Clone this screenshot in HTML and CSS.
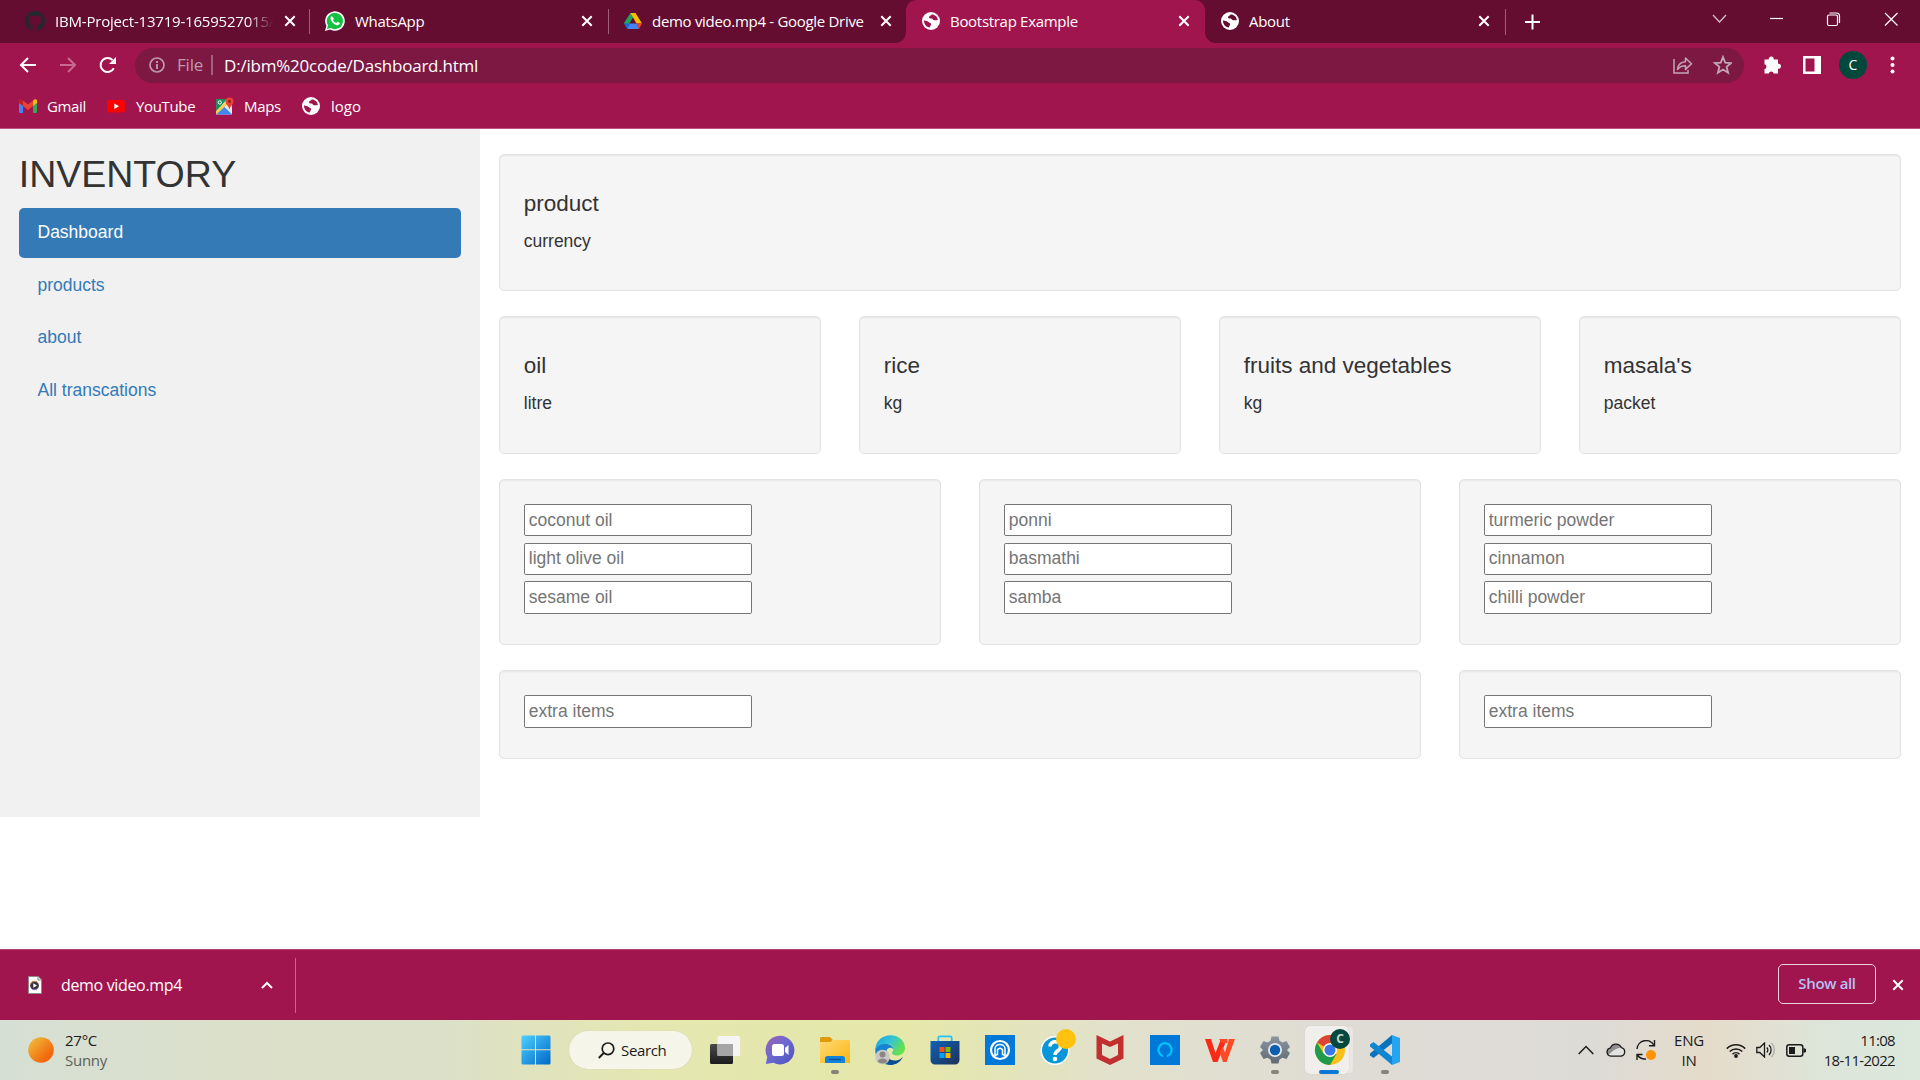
FILE: index.html
```html
<!DOCTYPE html>
<html lang="en">
<head>
<meta charset="utf-8">
<title>Bootstrap Example</title>
<link rel="stylesheet" href="styles.css">
</head>
<body>
<svg class="defs" width="0" height="0">
  <defs>
    <symbol id="globe" viewBox="0 0 18 18"><circle cx="9" cy="9" r="9" fill="#fff"/><path d="M2 8.200c1.600 1 3.400.5 4.600 1.700.8.900 2.200.8 2.500 2 .2 1.200-1.100 1.600-1.300 3.700C4.500 15 1.800 12.300 2 8.200zM9.600 2.500c-.3 1.200-2.400 1.200-2.600 2.500-.1 1.100 1.100 1.700 2.400 1.600 1.200 0 1.400 1.300 2.500 1.600 1.400.4 2.900-.2 4-.1-.4-3.400-3-5.700-6.300-5.600z" class="land"/></symbol>
    <symbol id="x" viewBox="0 0 12 12"><path d="M1.300 1.300l9.400 9.400M10.700 1.300l-9.400 9.400" fill="none" stroke="#fff" stroke-width="2"/></symbol>
    <linearGradient id="gWin" x1="0" y1="0" x2="1" y2="1"><stop offset="0" stop-color="#4fd0ff"/><stop offset="1" stop-color="#0067c8"/></linearGradient>
    <linearGradient id="gSun" x1="0" y1="0" x2="1" y2="1"><stop offset=".1" stop-color="#f0b838"/><stop offset=".75" stop-color="#f2690d"/></linearGradient>
    <linearGradient id="gDark" x1="0" y1="0" x2="0" y2="1"><stop offset="0" stop-color="#4a4a4a"/><stop offset="1" stop-color="#1c1c1c"/></linearGradient>
    <linearGradient id="gChat" x1="0" y1="0" x2="1" y2="1"><stop offset="0" stop-color="#9a63b0"/><stop offset=".5" stop-color="#6a68d0"/><stop offset="1" stop-color="#4a50c0"/></linearGradient>
    <linearGradient id="gFold" x1="0" y1="0" x2="1" y2="1"><stop offset="0" stop-color="#ffd976"/><stop offset="1" stop-color="#fbb612"/></linearGradient>
    <linearGradient id="gEdge" x1="0" y1="0" x2="1" y2=".5"><stop offset="0" stop-color="#1c9fe0"/><stop offset=".5" stop-color="#30c3d8"/><stop offset="1" stop-color="#66e24c"/></linearGradient>
    <linearGradient id="gStore" x1="0" y1="0" x2="1" y2="1"><stop offset="0" stop-color="#0f63b8"/><stop offset="1" stop-color="#1f2f58"/></linearGradient>
    <linearGradient id="gGear" x1="0" y1="0" x2="0" y2="1"><stop offset="0" stop-color="#8c959f"/><stop offset="1" stop-color="#616b76"/></linearGradient>
  </defs>
</svg>

<header class="browser">
  <div class="tabstrip">
    <div class="tab">
      <svg class="fav gh" viewBox="0 0 16 16"><path fill="#24292f" d="M8 0C3.580 0 0 3.580 0 8c0 3.540 2.290 6.530 5.470 7.590.4.070.55-.17.55-.38 0-.19-.010-.82-.010-1.490-2.010.37-2.530-.49-2.690-.94-.090-.23-.48-.94-.82-1.130-.28-.15-.68-.52-.010-.53.63-.010 1.080.58 1.230.82.72 1.210 1.870.87 2.330.66.070-.52.28-.87.51-1.070-1.780-.2-3.640-.89-3.640-3.950 0-.87.31-1.590.82-2.150-.080-.2-.36-1.020.080-2.120 0 0 .67-.21 2.200.82.64-.18 1.320-.27 2-.27s1.360.090 2 .27c1.530-1.040 2.200-.82 2.200-.82.44 1.100.16 1.920.080 2.120.51.56.82 1.270.82 2.150 0 3.070-1.870 3.750-3.650 3.950.29.25.54.73.54 1.480 0 1.070-.010 1.930-.010 2.200 0 .21.15.46.55.38A8 8 0 0 0 16 8c0-4.420-3.580-8-8-8z"/></svg>
      <span class="title fade">IBM-Project-13719-1659527015/</span>
      <svg class="close"><use href="#x"/></svg>
    </div>
    <div class="tab sep">
      <svg class="fav gh" viewBox="0 0 20 20"><path d="M0 20l1.400-5.200A9.800 9.800 0 1 1 5.200 18.600z" fill="#fff"/><path d="M2 18l1-3.700a8.100 8.100 0 1 1 2.900 2.800z" fill="#14c143"/><path d="M7 5.200c-.9.200-1.700 1.200-1.500 2.600.5 3 3.800 6 6.600 6.400 1.500.1 2.600-.8 2.700-2.200l-2.300-1.200-1.200 1.300c-1.600-.6-2.700-1.700-3.300-3.100l1-1.200z" fill="#fff"/></svg>
      <span class="title">WhatsApp</span>
      <svg class="close"><use href="#x"/></svg>
    </div>
    <div class="tab sep">
      <svg class="fav" viewBox="0 0 18 18"><path d="M6.500 1h5L6 10.500 3 16 0 11z" fill="#1ea55b"/><path d="M6.500 1h5L18 11.500h-5.500z" fill="#fbbc04"/><path d="M0 11.500h6L3.200 17z" fill="#1967d2"/><path d="M5.800 11.500h6.700L15 17H3.200z" fill="#4285f4"/><path d="M12.500 11.500H18L15 17z" fill="#ea4335"/></svg>
      <span class="title">demo video.mp4 - Google Drive</span>
      <svg class="close"><use href="#x"/></svg>
    </div>
    <div class="tab active">
      <svg class="fav"><use href="#globe"/></svg>
      <span class="title">Bootstrap Example</span>
      <svg class="close"><use href="#x"/></svg>
    </div>
    <div class="tab">
      <svg class="fav"><use href="#globe"/></svg>
      <span class="title">About</span>
      <svg class="close"><use href="#x"/></svg>
    </div>
    <svg class="newtab" viewBox="0 0 54 26"><path d="M.5 0v26" stroke="#9d5f7a"/><path d="M20 13h15M27.500 5.500v15" stroke="#fff" stroke-width="2"/></svg>
    <svg class="winbtns" viewBox="0 0 201 20"><g fill="none" stroke="#fff" stroke-width="1.200"><path d="M13 6l6.500 7L26 6" stroke="#d9c4cd"/><path d="M70 9.500h13"/><rect x="127.500" y="6" width="10" height="10.500" rx="1.500"/><path d="M129.500 4h7a3 3 0 0 1 3 3v7"/><path d="M185 4l12.500 12.500M197.500 4L185 16.500"/></g></svg>
  </div>

  <div class="toolbar">
    <svg class="nav" viewBox="0 0 102 20"><g fill="none" stroke="#fff" stroke-width="2"><path d="M17 10H2M9 3l-7 7 7 7"/><path d="M41 10h15M49 3l7 7-7 7" stroke="#c66b90"/><path d="M94.800 13.300A7 7 0 1 1 93.500 5"/></g><path d="M97 2v7h-7z" fill="#fff"/></svg>
    <div class="omnibox">
      <svg class="info" viewBox="0 0 16 16"><circle cx="8" cy="8" r="7" fill="none" stroke="#bd9aaa" stroke-width="1.700"/><path d="M8 7v5M8 4v2" stroke="#bd9aaa" stroke-width="1.900"/></svg>
      <span class="scheme">File</span>
      <span class="url">D:/ibm%20code/Dashboard.html</span>
      <svg class="omni-icons" viewBox="0 0 60 20"><g fill="none" stroke="#c3a6b3" stroke-width="1.500"><path d="M2 4v14h14v-3"/><path d="M5.500 14.500c.5-4.500 3-7.500 8-7.700V3l6 5.700-6 5.700v-3.700c-3.500 0-6 1-8 3.800z" stroke-linejoin="round"/><path d="M51 2l2.200 5.600 6 .4-4.600 3.800 1.500 5.900-5.100-3.200-5.100 3.200 1.500-5.900L42.800 8l6-.4z" stroke-width="1.800"/></g></svg>
    </div>
    <svg class="ext" viewBox="0 0 58 20"><path d="M1.500 4.500h4.300a2.500 2.500 0 1 1 4.900 0h4.300v4.300a2.500 2.500 0 1 1 0 4.900v4.800h-4.300a2.500 2.500 0 0 0-4.900 0H1.500v-4.400a2.500 2.500 0 0 0 0-4.900z" fill="#fff"/><path d="M40 1h18v18H40zM42.500 3.500v13h9v-13z" fill="#fff" fill-rule="evenodd"/></svg>
    <span class="avatar">C</span>
    <svg class="dots" viewBox="0 0 4 18"><g fill="#fff"><circle cx="2" cy="2.500" r="2"/><circle cx="2" cy="9" r="2"/><circle cx="2" cy="15.500" r="2"/></g></svg>
  </div>

  <nav class="bookmarks">
    <span class="bm b1"><svg viewBox="0 0 18 18"><path d="M0 4l4 3v9H1.200A1.200 1.200 0 0 1 0 15z" fill="#4285f4"/><path d="M18 4l-4 3v9h2.800A1.200 1.200 0 0 0 18 15z" fill="#34a853"/><path d="M4 3.500l5 4 5-4V9l-5 4-5-4z" fill="#ea4335"/><path d="M0 4c0-2 2-2.500 4-.5V9L0 6z" fill="#c5221f"/><path d="M18 4c0-2-2-2.500-4-.5V9l4-3z" fill="#fbbc04"/></svg>Gmail</span>
    <span class="bm b2"><svg viewBox="0 0 18 18"><rect y="3" width="18" height="12.500" rx="3" fill="#f00"/><path d="M7.300 6.500v5.500l4.700-2.700z" fill="#fff"/></svg>YouTube</span>
    <span class="bm b3"><svg viewBox="0 0 18 18"><rect y="2" width="16" height="15.500" rx="1" fill="#e8e8e8"/><path d="M0 2h11L0 15z" fill="#1e8e5a"/><path d="M0 17.500l8-8 8 8z" fill="#4285f4"/><path d="M0 17.500V14L12 2.500l2 2.500z" fill="#fbd04b"/><path d="M13.500.5a4 4 0 0 1 4 4c0 3-3 4-4 8-1-4-4-5-4-8a4 4 0 0 1 4-4z" fill="#ea4335"/><circle cx="13.500" cy="4.500" r="1.400" fill="#8c1f17"/><circle cx="3.800" cy="5.500" r="1.600" fill="none" stroke="#fff"/></svg>Maps</span>
    <span class="bm b4"><svg viewBox="0 0 18 18"><use href="#globe"/></svg>logo</span>
  </nav>
</header>

<main class="page">
  <div class="content">
    <aside class="sidenav">
      <h2>INVENTORY</h2>
      <ul class="nav-stacked">
        <li class="current"><a>Dashboard</a></li>
        <li><a>products</a></li>
        <li><a>about</a></li>
        <li><a>All transcations</a></li>
      </ul>
    </aside>
    <section class="main-col">
      <div class="well"><h4>product</h4><p>currency</p></div>
      <div class="row quarters">
        <div class="well"><h4>oil</h4><p>litre</p></div>
        <div class="well"><h4>rice</h4><p>kg</p></div>
        <div class="well"><h4>fruits and vegetables</h4><p>kg</p></div>
        <div class="well"><h4>masala's</h4><p>packet</p></div>
      </div>
      <div class="row thirds">
        <div class="well"><input placeholder="coconut oil"><input placeholder="light olive oil"><input placeholder="sesame oil"></div>
        <div class="well"><input placeholder="ponni"><input placeholder="basmathi"><input placeholder="samba"></div>
        <div class="well"><input placeholder="turmeric powder"><input placeholder="cinnamon"><input placeholder="chilli powder"></div>
      </div>
      <div class="row thirds">
        <div class="well wide"><input placeholder="extra items"></div>
        <div class="well"><input placeholder="extra items"></div>
      </div>
    </section>
  </div>
</main>

<div class="downloads">
  <div class="item">
    <svg class="file" viewBox="0 0 14 18"><path d="M.5.500h9.500l3.500 3.500v13.500H.5z" fill="#fff" stroke="#8b8b8b"/><path d="M10 .5V4h3.500" fill="#ddd" stroke="#8b8b8b"/><circle cx="6.500" cy="9.500" r="4.400" fill="#3a3340"/><path d="M2.300 8.500a4.300 4.300 0 0 1 8 -1" fill="none" stroke="#f28a35"/><path d="M3 12a4.300 4.300 0 0 0 7 0" fill="none" stroke="#a06cc0"/><path d="M5.300 7.300v4.400L9 9.500z" fill="#fff"/></svg>
    <span class="name">demo video.mp4</span>
    <svg class="caret" viewBox="0 0 12 8"><path d="M1 7l5-5 5 5" fill="none" stroke="#fff" stroke-width="2"/></svg>
  </div>
  <button class="showall">Show all</button>
  <svg class="close"><use href="#x"/></svg>
</div>

<footer class="taskbar">
  <div class="weather">
    <svg viewBox="0 0 26 26"><circle cx="13" cy="13" r="12.800" fill="url(#gSun)"/></svg>
    <div><div>27°C</div><div class="muted">Sunny</div></div>
  </div>
  <div class="apps">
    <span class="app start"><svg viewBox="0 0 30 30"><path d="M.5 2a1.500 1.500 0 0 1 1.500-1.500h12v13.800H.5zM15 .5h13a1.500 1.500 0 0 1 1.500 1.500v12.300H15zM.5 15.300H14v14.200H2A1.500 1.500 0 0 1 .5 28zM15 15.300h14.500V28a1.500 1.500 0 0 1-1.500 1.500H15z" fill="url(#gWin)"/></svg></span>
    <span class="search"><svg viewBox="0 0 17 17"><circle cx="10" cy="6.800" r="5.800" fill="none" stroke="#1b1b1b" stroke-width="1.700"/><path d="M5.700 11L.8 16" stroke="#1b1b1b" stroke-width="1.900"/></svg>Search</span>
    <span class="app"><svg viewBox="0 0 30 30"><rect y="9" width="23" height="20" rx="1.500" fill="url(#gDark)"/><rect x="7.500" y="1" width="22.500" height="20" rx="1.500" fill="#f5f5f5"/><rect x="7.500" y="9" width="15.500" height="12" fill="#a6a6a6"/></svg></span>
    <span class="app"><svg viewBox="0 0 30 30"><path d="M15 .8a14.300 14.300 0 1 1-6.500 27L.8 29l1.500-7A14.300 14.300 0 0 1 15 .8z" fill="url(#gChat)"/><rect x="7" y="9" width="12" height="12" rx="2.500" fill="#fff"/><path d="M20 13l3.500-3v10L20 17z" fill="#fff"/></svg></span>
    <span class="app run"><svg viewBox="0 0 30 30"><path d="M0 3.500A1.500 1.500 0 0 1 1.500 2H10l3 3v6H0z" fill="#e09b09"/><path d="M0 7h10.500l2-2H28.500A1.500 1.500 0 0 1 30 6.500V28H0z" fill="url(#gFold)"/><path d="M5 28v-4.500A2.500 2.500 0 0 1 7.500 21h15a2.500 2.500 0 0 1 2.500 2.500V28z" fill="#1083d8"/><path d="M9 24.500h12" stroke="#0c4f91" stroke-width="1.300"/></svg></span>
    <span class="app"><svg viewBox="0 0 30 30"><path d="M.3 14C1 5 8 .2 15.500.2 24 .2 30 6 30 13c0 5-4 7.500-8 7.500-3 0-5-1-5-2.500s1.500-1.600 1.500-4c0-3-3-5-6.500-5C7 9 3 10.500.3 14z" fill="url(#gEdge)"/><path d="M.3 14C3 9.500 8 8.500 12 9c4 .5 6.500 3 6.500 5.500-2-3-6-2-7 1-1.500 5 3 11.500 9 12.500-2 1.300-4 1.900-6 1.900C6 29.500-.5 23 .3 14z" fill="#1684d2"/><path d="M11.500 15.500c-1.500 5 3 11 10 10 2.500-.5 5-2 6.500-3.500C25 28 19 31 13 29.500 7 26 8 18 11.500 15.500z" fill="#0b4c92"/><circle cx="7.500" cy="22" r="7.300" fill="#cbc9c7"/><circle cx="7.500" cy="19.500" r="3" fill="#8a8683"/><path d="M2.500 26.500c1-4 9-4 10 0a7 7 0 0 1-10 0z" fill="#8a8683"/></svg></span>
    <span class="app"><svg viewBox="0 0 30 30"><path d="M8.300 7V2.800A1.500 1.500 0 0 1 9.800 1.300h10.400a1.500 1.500 0 0 1 1.500 1.500V7" fill="none" stroke="#27c4f5" stroke-width="1.800"/><path d="M.5 6h29v19a4.500 4.500 0 0 1-4.500 4.500H5A4.500 4.500 0 0 1 .5 25z" fill="url(#gStore)"/><path d="M9.500 12h5v5h-5z" fill="#f25022"/><path d="M15.500 12h5v5h-5z" fill="#7fba00"/><path d="M9.500 18h5v5h-5z" fill="#00a4ef"/><path d="M15.500 18h5v5h-5z" fill="#ffb900"/></svg></span>
    <span class="app"><svg viewBox="0 0 30 30"><path fill="#0078d7" d="M0 0h30v30H0z"/><circle cx="15" cy="15" r="9" fill="none" stroke="#fff" stroke-width="2.200"/><path d="M10 20.500v-6.500c0-6 10-6 10 0v6.500l-2.500-1v-5l-2.500-1.500-2.500 1.500v5z" fill="none" stroke="#fff" stroke-width="1.500"/></svg></span>
    <span class="app"><svg viewBox="0 0 30 30"><circle cx="15" cy="15.500" r="14.500" fill="#fff"/><circle cx="15" cy="15.500" r="13" fill="#0a97d9"/><path d="M10 11.500c0-6.500 10.500-6 10.500 0 0 4.500-5.500 4-5.500 8.500" fill="none" stroke="#fff" stroke-width="3.500"/><circle cx="15" cy="24" r="2.300" fill="#fff"/><circle cx="26" cy="4" r="10" fill="#ffc20e"/></svg></span>
    <span class="app"><svg viewBox="0 0 30 30"><path d="M1.500 0L15 6.500 28.500 0v23.500L15 30 1.500 23.500zM7 8.500V20l8 4 8-4V8.500L15 12z" fill="#c22f31" fill-rule="evenodd"/></svg></span>
    <span class="app"><svg viewBox="0 0 30 30"><path fill="#0078d7" d="M0 0h30v30H0z"/><path d="M13 21.200a6.600 6.600 0 1 1 4 0" fill="none" stroke="#00caff" stroke-width="2"/></svg></span>
    <span class="app"><svg viewBox="0 0 30 30"><path d="M0 4h6l4.500 14L16 4h6l-9.500 23H8z" fill="#fa2a17"/><path d="M14 4h8.500v4H17zM24 4h6l-8.500 23H18l-3.500-10 3-6 2.500 6.500z" fill="#ff4a25"/></svg></span>
    <span class="app run"><svg viewBox="0 0 30 30"><path d="M11.500 1.500h7l1 4.200 3 1.700 4-1.300L30 12l-3 3 3 3-3.500 6-4-1.300-3 1.700-1 4.100h-7l-1-4.100-3-1.700-4 1.300L0 18l3-3-3-3 3.500-5.900 4 1.300 3-1.700z" fill="url(#gGear)"/><circle cx="15" cy="15" r="7" fill="#e8eaec"/><circle cx="15" cy="15" r="5.200" fill="#0c5fae"/></svg></span>
    <span class="app focused"><svg viewBox="0 0 30 30"><circle cx="15" cy="15" r="15" fill="#fbc116"/><path d="M15 15L2 7.500A15 15 0 0 1 28 7.500H15z" fill="#db4437"/><path d="M15 15l6.500 4L15 30A15 15 0 0 1 2 7.500l6.500 11z" fill="#1e9b4b"/><circle cx="15" cy="15" r="7" fill="#fff"/><circle cx="15" cy="15" r="5.500" fill="#3b78e7"/></svg><b class="badge">C</b></span>
    <span class="app run"><svg viewBox="0 0 30 30"><path d="M22 0l8 3v24l-8 3z" fill="#25a4f0"/><path d="M22 0v8.500L3.500 23 0 20.500v-2z" fill="#0b72bd"/><path d="M22 30v-8.500L3.500 7 0 9.500v2z" fill="#1187d4"/></svg></span>
  </div>
  <div class="tray">
    <svg class="arrow" viewBox="0 0 16 10"><path d="M.7 9L8 1.500 15.300 9" fill="none" stroke="#1b1b1b" stroke-width="1.500"/></svg>
    <svg class="cloud" viewBox="0 0 20 14"><path d="M5 13.200a4.200 4.200 0 0 1-.6-8.300 6 6 0 0 1 11-.3 4.400 4.400 0 0 1-.4 8.600z" fill="#e2e2e0"/><path d="M2 12A4 4 0 0 1 4.400 5a6 6 0 0 1 11-.4c-6 .5-9 4-13.400 7.400z" fill="#8f8f8f"/><path d="M5 13.200a4.200 4.200 0 0 1-.6-8.300 6 6 0 0 1 11-.3 4.400 4.400 0 0 1-.4 8.600z" fill="none" stroke="#1b1b1b" stroke-width="1.300"/></svg>
    <svg class="sync" viewBox="0 0 20 20"><g fill="none" stroke="#1b1b1b" stroke-width="1.400"><path d="M1 9a9 9 0 0 1 17-3.500M18.500 0v5.800H13M1 20v-5.500h5.500M1.500 15A9 9 0 0 0 10 19"/></g><circle cx="15" cy="15" r="5" fill="#ff9409"/></svg>
    <div class="lang"><div>ENG</div><div>IN</div></div>
    <svg class="wifi" viewBox="0 0 20 15"><g fill="none" stroke="#1b1b1b" stroke-width="1.500"><path d="M.8 5.600a13 13 0 0 1 18.400 0M3.700 8.500a9 9 0 0 1 12.600 0M6.500 11.200a5 5 0 0 1 7 0"/></g><circle cx="10" cy="13" r="1.900" fill="#1b1b1b"/></svg>
    <svg class="vol" viewBox="0 0 20 16"><g fill="none" stroke="#1b1b1b" stroke-width="1.300"><path d="M.8 5.500h3L8.500 1v14l-4.700-4.500h-3z"/><path d="M10.800 5.500a3.500 3.500 0 0 1 0 5M13 3a7 7 0 0 1 0 10"/><path d="M15.500 1a10 10 0 0 1 0 14" stroke="#aaa"/></g></svg>
    <svg class="bat" viewBox="0 0 20 13"><rect x=".8" y=".8" width="16" height="11.400" rx="2.500" fill="none" stroke="#1b1b1b" stroke-width="1.500"/><rect x="3" y="3" width="6" height="7" fill="#1b1b1b"/><path d="M17.500 4l2.500 1v3l-2.500 1z" fill="#1b1b1b"/></svg>
    <div class="clock"><div>11:08</div><div>18-11-2022</div></div>
  </div>
</footer>
</body>
</html>
```
FILE: styles.css
```css
* { box-sizing: border-box; }

body {
  margin: 0;
  width: 1920px;
  height: 1080px;
  overflow: hidden;
  display: flex;
  flex-direction: column;
  background: #fff;
  font-family: "Open Sans", "Noto Sans", sans-serif;
}

svg { display: block; flex: none; }
.defs { position: absolute; }

/* Browser frame */
.browser {
  --land: #a0154d;
  height: 129px;
  flex: none;
  background: #a0154d;
  border-bottom: 1px solid #bb5580;
  color: #fff;
}

.tabstrip {
  height: 43px;
  display: flex;
  align-items: center;
  padding-left: 10px;
  background: #640d30;
}
.tab {
  --land: #640d30;
  width: 299px;
  height: 43px;
  flex: none;
  display: flex;
  align-items: center;
  padding: 0 15px 2px 15px;
  font-size: 15px;
  letter-spacing: -0.3px;
}
.tab.sep {
  padding-left: 16px;
  background: linear-gradient(#9d5f7a, #9d5f7a) 0 9px / 1px 25px no-repeat;
}
.tab.active {
  --land: #a0154d;
  position: relative;
  left: -1px;
  padding-left: 16px;
  background: #a0154d;
  border-radius: 10px 10px 0 0;
}
.tab.active::before,
.tab.active::after {
  content: "";
  position: absolute;
  bottom: 0;
  width: 10px;
  height: 10px;
}
.tab.active::before {
  left: -10px;
  background: radial-gradient(circle at 0 0, transparent 9.5px, #a0154d 10px);
}
.tab.active::after {
  right: -10px;
  background: radial-gradient(circle at 100% 0, transparent 9.5px, #a0154d 10px);
}
.fav { width: 18px; height: 18px; }
.fav.gh { width: 20px; height: 20px; }
.land { fill: var(--land); }
.title { margin-left: 10px; flex: 1; white-space: nowrap; overflow: hidden; }
.title.fade {
  flex: none;
  width: 218px;
  margin-right: 11px;
  letter-spacing: -0.2px;
  -webkit-mask-image: linear-gradient(90deg, #000 88%, transparent);
  mask-image: linear-gradient(90deg, #000 88%, transparent);
}
.close { width: 12px; height: 12px; }
.newtab { width: 54px; height: 26px; margin-right: auto; }
.winbtns { width: 201px; height: 20px; margin: 0 19px 5px 0; }

.toolbar {
  height: 44px;
  display: flex;
  align-items: center;
}
.nav { width: 102px; height: 20px; margin: 0 14px 0 19px; }
.omnibox {
  width: 1609px;
  height: 35px;
  display: flex;
  align-items: center;
  padding: 0 12px 0 14px;
  border-radius: 18px;
  background: #7c1842;
  font-size: 17px;
}
.info { width: 16px; height: 16px; }
.scheme {
  margin-left: 12px;
  padding-right: 8px;
  border-right: 2px solid #a3607f;
  line-height: 20px;
  letter-spacing: -0.2px;
  color: #bd9aaa;
}
.url { margin-left: 11px; flex: 1; letter-spacing: -0.22px; }
.omni-icons { width: 60px; height: 20px; }
.ext { width: 58px; height: 20px; margin-left: 19px; }
.avatar {
  width: 28px;
  height: 28px;
  margin: 0 23px 0 18px;
  border-radius: 50%;
  background: #00483c;
  font-size: 14px;
  line-height: 27px;
  text-align: center;
}
.dots { width: 5px; height: 18px; }

.bookmarks {
  height: 37px;
  display: flex;
  align-items: center;
  padding-left: 19px;
  font-size: 15px;
  letter-spacing: -0.35px;
}
.bm { display: flex; align-items: center; gap: 10px; }
.bm svg { width: 18px; height: 18px; }
.b1 { width: 88px; }
.b2 { width: 109px; gap: 11px; }
.b3 { width: 86px; }
.b4 { gap: 11px; letter-spacing: 0; }

/* Page content, shown at 125% */
.page {
  height: 656px;
  flex: none;
  zoom: 1.25;
  overflow: hidden;
  color: #333;
  font: 14px/20px "Liberation Sans", Arial, sans-serif;
}
.content { display: flex; height: 550px; }
.sidenav { width: 384px; padding: 0 15px; background: #f1f1f1; }
h2 { margin: 20px 0 10px; font-size: 30px; font-weight: 400; line-height: 33px; }
.nav-stacked { margin: 0; padding: 0; list-style: none; }
.nav-stacked li + li { margin-top: 2px; }
.nav-stacked a {
  display: block;
  padding: 10px 15px;
  border-radius: 4px;
  color: #337ab7;
}
.nav-stacked .current a { background: #337ab7; color: #fff; }

.main-col { width: 1152px; padding: 20px 15px 0; }
.row { display: grid; column-gap: 30px; }
.quarters { grid-template-columns: repeat(4, 1fr); }
.thirds { grid-template-columns: repeat(3, 1fr); }
.wide { grid-column: span 2; }
.well {
  padding: 19.3px 19.2px 19.2px;
  margin-bottom: 20px;
  border: 1px solid #e3e3e3;
  border-radius: 4px;
  background: #f5f5f5;
  box-shadow: inset 0 1px 1px rgba(0, 0, 0, .05);
}
h4 { margin: 10px 0; font-size: 18px; font-weight: 400; line-height: 19.8px; }
p { margin: 0 0 10px; }
input {
  display: block;
  width: 182.4px;
  height: 26px;
  margin: 0 0 5px;
  padding: 1px 3.2px;
  border: 1px solid #767676;
  border-radius: 1.5px;
  background: #fff;
  font: inherit;
}
input::placeholder { color: #757575; }

/* Download shelf */
.downloads {
  height: 71px;
  flex: none;
  display: flex;
  align-items: center;
  padding-right: 16px;
  background: #a0154d;
  border-top: 1px solid #b3446f;
  color: #fff;
}
.item {
  width: 296px;
  height: 55px;
  display: flex;
  align-items: center;
  margin-right: auto;
  padding: 0 22px 0 28px;
  border-right: 1px solid #c4668c;
}
.file { width: 14px; height: 18px; }
.name { flex: 1; margin-left: 19px; font-size: 16px; letter-spacing: -0.34px; }
.caret { width: 12px; height: 8px; }
.showall {
  width: 98px;
  height: 40px;
  margin: 0 16px 2px 0;
  padding: 0 0 2px;
  border: 1px solid #ead5de;
  border-radius: 5px;
  background: none;
  color: #b4c0f6;
  font: 600 15px "Open Sans", sans-serif;
  letter-spacing: -0.35px;
}

/* Taskbar */
.taskbar {
  height: 60px;
  flex: none;
  display: flex;
  color: #1b1b1b;
  font-size: 15px;
  line-height: 20px;
  background: linear-gradient(90deg, #d6dfd4, #dce0c9 14%, #dce0c8 23%, #e4e7b0 34%, #e5e8a9 47%, #e2e1cc 58%, #dfdcd5 70%, #dddbd6 83%, #e5dbcb 89%, #dde5d9 95%, #dce8dc);
}
.weather {
  width: 507px;
  display: flex;
  align-items: center;
  padding-left: 28px;
  gap: 11px;
  letter-spacing: -0.25px;
}
.weather svg { width: 26px; height: 26px; }
.muted { color: #5c5f56; }

.apps { display: flex; align-items: center; }
.app {
  position: relative;
  width: 55px;
  height: 60px;
  display: flex;
  align-items: center;
  justify-content: center;
}
.app svg { width: 30px; height: 30px; overflow: visible; }
.start { width: 58px; }
.run::after,
.focused::after {
  content: "";
  position: absolute;
  left: 24px;
  bottom: 6px;
  width: 8px;
  height: 4px;
  border-radius: 2px;
  background: #85837a;
}
.focused::before {
  content: "";
  position: absolute;
  left: 3px;
  top: 6px;
  width: 44px;
  height: 48px;
  border-radius: 5px;
  background: #f1efec;
  box-shadow: 0 0 1px #b5b2ac, 5px 0 0 -1px #eae7e2;
}
.focused svg { position: relative; }
.focused::after { left: 17px; width: 20px; background: #0b78d4; }
.badge {
  position: absolute;
  left: 28px;
  top: 9px;
  width: 20px;
  height: 20px;
  border-radius: 50%;
  background: #06483d;
  color: #c7d8d3;
  font-size: 12px;
  line-height: 20px;
  text-align: center;
}
.search {
  width: 123px;
  height: 38px;
  display: flex;
  align-items: center;
  gap: 6px;
  margin: 0 5px 0 4px;
  padding-left: 29px;
  border-radius: 19px;
  background: #f5f6e9;
  box-shadow: 0 0 1px #bfc1a0;
  font-size: 15px;
  letter-spacing: -0.35px;
}
.search svg { width: 17px; height: 17px; }

.tray {
  margin-left: auto;
  display: flex;
  align-items: center;
  padding-right: 25px;
  letter-spacing: -0.2px;
}
.arrow { width: 16px; height: 10px; margin-right: 12px; }
.cloud { width: 20px; height: 14px; margin-right: 10px; }
.sync { width: 20px; height: 20px; }
.lang { width: 66px; text-align: center; }
.wifi { width: 20px; height: 15px; margin: 0 10px 0 4px; }
.vol { width: 20px; height: 16px; margin-right: 10px; }
.bat { width: 20px; height: 13px; }
.clock { width: 89px; text-align: right; white-space: nowrap; letter-spacing: -0.7px; }
```
